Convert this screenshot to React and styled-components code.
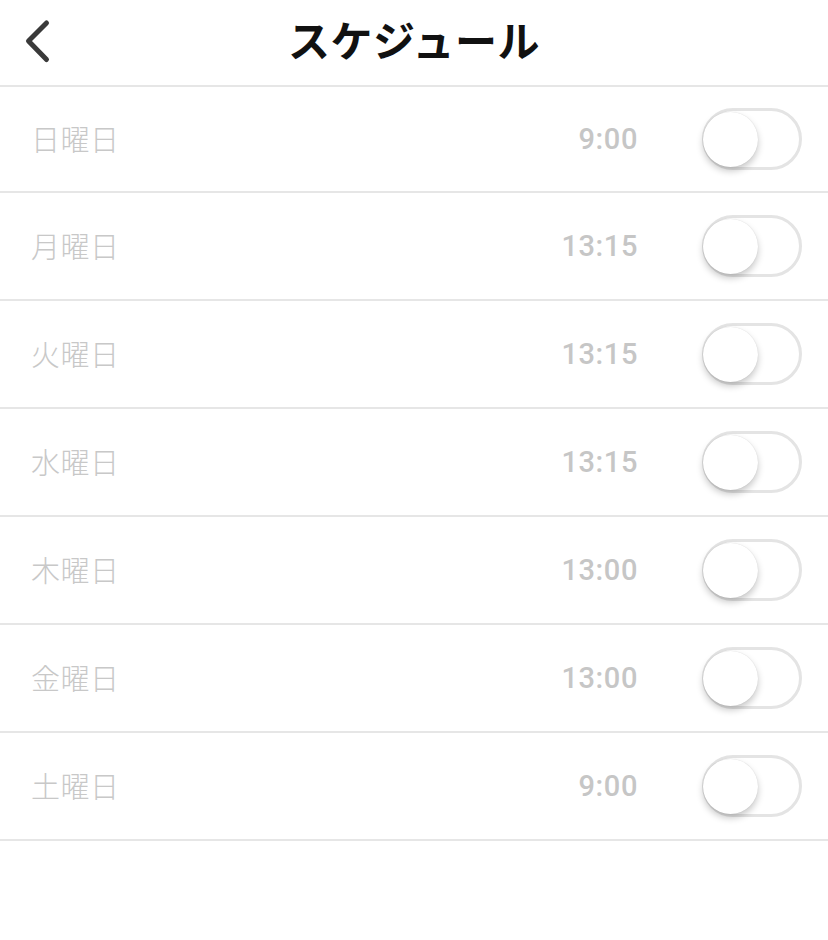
import React from "react";
import styled, { createGlobalStyle } from "styled-components";

const Global = createGlobalStyle`
  html, body { margin: 0; padding: 0; background: #fff; }
  body { font-family: "Noto Sans CJK JP", "Noto Sans", sans-serif; }
`;

const Page = styled.div`
  width: 828px;
  min-height: 940px;
  background: #fff;
`;

const Header = styled.header`
  height: 85px;
  border-bottom: 2px solid #e6e6e6;
  display: flex;
  align-items: center;
  justify-content: center;
  position: relative;
`;

const BackButton = styled.button`
  position: absolute;
  left: 20px;
  top: 14px;
  width: 36px;
  height: 54px;
  padding: 0;
  border: 0;
  background: none;
  display: flex;
  align-items: center;
  justify-content: center;
`;

const Title = styled.h1`
  margin: 0;
  font-family: "Noto Sans CJK JP", sans-serif;
  font-weight: 700;
  font-size: 42px;
  line-height: 1;
  color: #111;
  letter-spacing: 0.5px;
  transform: translateY(-4px);
`;

const List = styled.ul`
  list-style: none;
  margin: 0;
  padding: 0;
`;

const Row = styled.li`
  height: ${(p) => (p.$first ? 104 : 106)}px;
  border-bottom: 2px solid #e6e6e6;
  display: flex;
  align-items: center;
  padding: 0 26px 0 31px;
`;

const Day = styled.span`
  flex: 1;
  font-family: "Noto Sans CJK JP", sans-serif;
  font-weight: 300;
  font-size: 29px;
  letter-spacing: 0.5px;
  color: #c8c8c8;
  transform: translateY(-1px);
`;

const Time = styled.span`
  font-family: Roboto, "Noto Sans", sans-serif;
  font-weight: 500;
  font-size: 29px;
  letter-spacing: 0.6px;
  color: #c6c6c6;
  margin-right: 64px;
`;

const Track = styled.div`
  width: 100px;
  height: 62px;
  box-sizing: border-box;
  border: 3px solid #e4e4e4;
  border-radius: 31px;
  background: #fff;
  position: relative;
`;

const Knob = styled.div`
  position: absolute;
  left: -2px;
  top: 1px;
  width: 55px;
  height: 55px;
  border-radius: 50%;
  background: #fff;
  box-shadow: 0 4px 7px rgba(0, 0, 0, 0.22), 0 0 1px rgba(0, 0, 0, 0.15);
`;

const rows = [
  ["日曜日", "9:00"],
  ["月曜日", "13:15"],
  ["火曜日", "13:15"],
  ["水曜日", "13:15"],
  ["木曜日", "13:00"],
  ["金曜日", "13:00"],
  ["土曜日", "9:00"],
];

export default function App() {
  return (
    <Page>
      <Global />
      <Header>
        <BackButton aria-label="戻る">
          <svg width="36" height="54" viewBox="20 14 36 54">
            <path
              d="M46.5 23 L28.5 41 L46.5 59.5"
              fill="none"
              stroke="#3a3a3a"
              strokeWidth="5"
              strokeLinecap="round"
              strokeLinejoin="round"
            />
          </svg>
        </BackButton>
        <Title>スケジュール</Title>
      </Header>
      <List>
        {rows.map(([d, t], i) => (
          <Row key={d} $first={i === 0}>
            <Day>{d}</Day>
            <Time>{t}</Time>
            <Track>
              <Knob />
            </Track>
          </Row>
        ))}
      </List>
    </Page>
  );
}
